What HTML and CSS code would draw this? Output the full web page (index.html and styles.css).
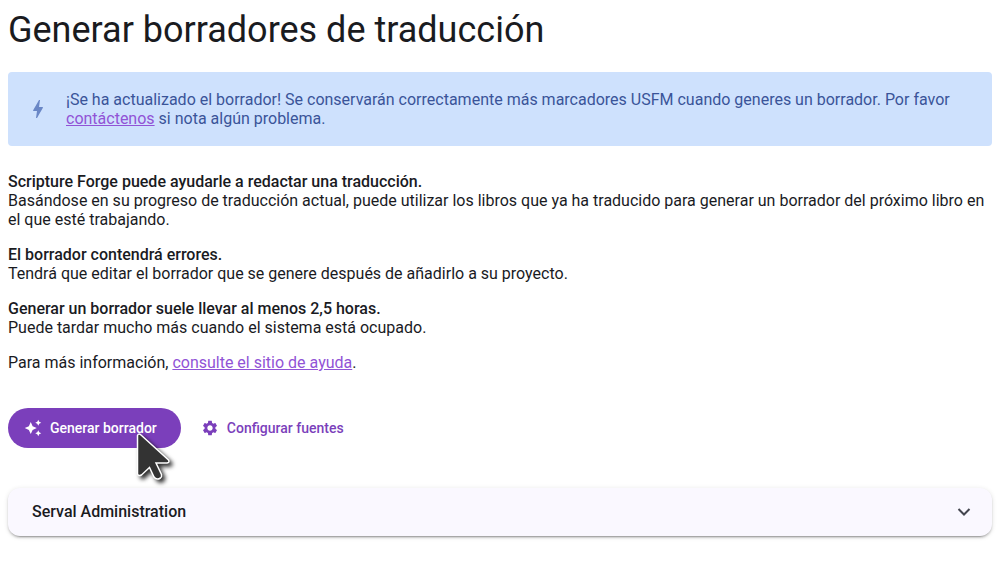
FILE: index.html
```html
<!DOCTYPE html>
<html lang="es">
<head>
<meta charset="utf-8">
<meta name="viewport" content="width=device-width, initial-scale=1">
<title>Generar borradores de traducción</title>
<link rel="stylesheet" href="styles.css">
</head>
<body>
<main class="page">
  <h1 class="title">Generar borradores de traducción</h1>

  <aside class="notice">
    <svg class="notice-icon" viewBox="0 0 24 24" aria-hidden="true"><path d="M11 21h-1l1-7H7.500c-.58 0-.57-.32-.38-.66.19-.34.05-.08.07-.12C8.480 10.940 10.420 7.540 13 3h1l-1 7h3.500c.49 0 .56.33.47.51l-.07.15C12.960 17.550 11 21 11 21z"/></svg>
    <p class="notice-text">¡Se ha actualizado el borrador! Se conservarán correctamente más marcadores USFM cuando generes un borrador. Por favor <a class="link" href="#contacto">contáctenos</a> si nota algún problema.</p>
  </aside>

  <section class="info">
    <p><strong>Scripture Forge puede ayudarle a redactar una traducción.</strong><br>Basándose en su progreso de traducción actual, puede utilizar los libros que ya ha traducido para generar un borrador del próximo libro en el que esté trabajando.</p>
    <p><strong>El borrador contendrá errores.</strong><br>Tendrá que editar el borrador que se genere después de añadirlo a su proyecto.</p>
    <p><strong>Generar un borrador suele llevar al menos 2,5 horas.</strong><br>Puede tardar mucho más cuando el sistema está ocupado.</p>
    <p>Para más información, <a class="link" href="#ayuda">consulte el sitio de ayuda</a>.</p>
  </section>

  <div class="actions">
    <button class="button button-primary" type="button">
      <svg class="button-icon" viewBox="0 0 24 24" aria-hidden="true"><path d="M19 9l1.25-2.75L23 5l-2.75-1.25L19 1l-1.25 2.75L15 5l2.75 1.25L19 9zm-7.5.5L9 4 6.5 9.5 1 12l5.5 2.5L9 20l2.5-5.5L17 12l-5.5-2.5zM19 15l-1.25 2.75L15 19l2.75 1.25L19 23l1.25-2.75L23 19l-2.75-1.25L19 15z"/></svg>
      Generar borrador
      <svg class="pointer" viewBox="0 0 44 56" aria-hidden="true"><path d="M3.500 3.500V42Q4.500 44.500 7.500 43L15.500 35.500L20 45Q22.500 48.500 26.500 46Q28 45 27.500 42.500L22 31H33Q36 30.500 34.500 28L7 3Q4.500 1 3.500 3.500Z"/></svg>
    </button>
    <button class="button button-text" type="button">
      <svg class="button-icon" viewBox="0 0 24 24" aria-hidden="true"><path d="M19.140 12.940c.04-.3.06-.61.06-.94 0-.32-.02-.64-.07-.94l2.030-1.580c.18-.14.23-.41.12-.61l-1.920-3.320c-.12-.22-.37-.29-.59-.22l-2.390.96c-.5-.38-1.030-.7-1.620-.94l-.36-2.540c-.04-.24-.24-.41-.48-.41h-3.840c-.24 0-.43.17-.47.41l-.36 2.540c-.59.24-1.130.57-1.620.94l-2.390-.96c-.22-.08-.47 0-.59.22L2.740 8.870c-.12.21-.08.47.12.61l2.030 1.580c-.05.3-.09.63-.09.94s.02.64.07.94l-2.030 1.580c-.18.14-.23.41-.12.61l1.920 3.320c.12.22.37.29.59.22l2.390-.96c.5.38 1.030.7 1.620.94l.36 2.540c.05.24.24.41.48.41h3.840c.24 0 .44-.17.47-.41l.36-2.540c.59-.24 1.130-.56 1.620-.94l2.390.96c.22.08.47 0 .59-.22l1.920-3.320c.12-.22.07-.47-.12-.61l-2.010-1.580zM12 15.600c-1.980 0-3.600-1.620-3.600-3.600s1.620-3.600 3.600-3.600 3.600 1.620 3.600 3.600-1.620 3.600-3.600 3.600z"/></svg>
      Configurar fuentes
    </button>
  </div>

  <button class="panel" type="button" aria-expanded="false">
    <span>Serval Administration</span>
    <svg class="panel-icon" viewBox="0 0 24 24" aria-hidden="true"><path d="M6.500 9l5.500 5.500L17.500 9"/></svg>
  </button>
</main>
</body>
</html>
```
FILE: styles.css
```css
* {
  box-sizing: border-box;
}

body {
  margin: 0;
  background: #fff;
  color: #1a1b1f;
  font: 400 16px/19px Roboto, sans-serif;
}

.page {
  padding: 8px;
}

.title {
  margin: 0 0 20px;
  font-size: 36px;
  font-weight: 400;
  line-height: 44px;
}

.notice {
  display: flex;
  align-items: center;
  gap: 16px;
  padding: 18px;
  border-radius: 4px;
  background: #cee1fd;
  color: #3a5499;
}

.notice-icon {
  flex: none;
  width: 24px;
  height: 24px;
  fill: #6a87c6;
}

.notice-text {
  margin: 0;
}

.link {
  color: #9153d6;
}

.info {
  display: grid;
  gap: 16px;
  margin-top: 26px;
}

.info p {
  margin: 0;
}

.info strong {
  font-weight: 500;
}

.actions {
  display: flex;
  gap: 8px;
  margin-top: 36px;
}

.button {
  position: relative;
  display: flex;
  align-items: center;
  gap: 8px;
  height: 40px;
  border: 0;
  border-radius: 20px;
  font: 500 14px/20px Roboto, sans-serif;
  cursor: pointer;
}

.button-primary {
  padding: 0 24px 0 16px;
  background: #7b3fbb;
  color: #fff;
}

.button-text {
  padding: 0 12px;
  background: transparent;
  color: #7b3fbb;
}

.button-icon {
  width: 18px;
  height: 18px;
  fill: currentColor;
}

.pointer {
  position: absolute;
  top: 24px;
  left: 126px;
  width: 44px;
  height: 56px;
  overflow: visible;
  fill: #333;
  stroke: #fff;
  stroke-width: 1.5;
  filter: drop-shadow(3px 3px 2px #000000d0);
  pointer-events: none;
}

.panel {
  display: flex;
  align-items: center;
  justify-content: space-between;
  width: 100%;
  height: 48px;
  margin-top: 40px;
  padding: 0 16px 0 24px;
  border: 0;
  border-radius: 12px;
  background: #faf8ff;
  box-shadow: 0 3px 1px -2px #00000033, 0 2px 2px #00000024, 0 1px 5px #0000001f;
  color: #1a1b1f;
  font: 500 16px/24px Roboto, sans-serif;
  text-align: left;
  cursor: pointer;
}

.panel-icon {
  width: 24px;
  height: 24px;
  fill: none;
  stroke: #44464f;
  stroke-width: 2;
}
```
